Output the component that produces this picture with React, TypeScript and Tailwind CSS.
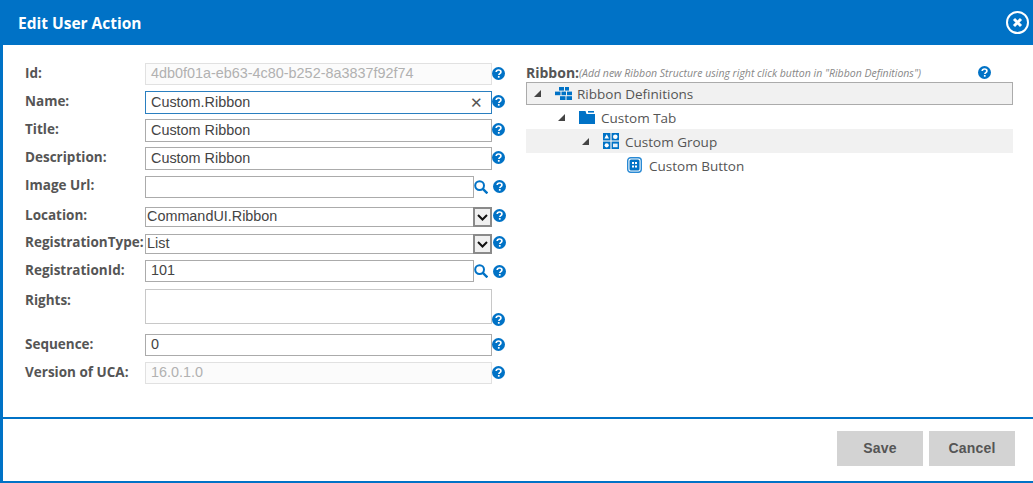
import React from "react";

const labelFont = { fontFamily: '"Open Sans", "Liberation Sans", sans-serif' };

const Help = ({ className = "" }: { className?: string }) => (
  <svg width="13" height="13" viewBox="0 0 13 13" className={`shrink-0 ${className}`}>
    <circle cx="6.5" cy="6.5" r="6.5" fill="#0072c6" />
    <path d="M4.2 5.1c0-1.3 1-2.1 2.4-2.1s2.3.8 2.3 1.9c0 1.7-2 1.6-2 3" fill="none" stroke="#fff" strokeWidth="1.7" />
    <rect x="5.9" y="9" width="1.7" height="1.7" fill="#fff" />
  </svg>
);

const Search = () => (
  <svg width="14" height="14" viewBox="0 0 14 14" className="shrink-0">
    <circle cx="5.6" cy="5.6" r="4.4" fill="none" stroke="#0072c6" strokeWidth="2" />
    <path d="M8.8 8.8l4.6 4.6" stroke="#0072c6" strokeWidth="2.4" />
  </svg>
);

const Arrow = () => (
  <svg width="7" height="7" viewBox="0 0 7 7" className="shrink-0">
    <path d="M7 0v7H0z" fill="#444" />
  </svg>
);

const Label = ({ children, className = "" }: { children: React.ReactNode; className?: string }) => (
  <div className={`w-[120px] shrink-0 whitespace-nowrap text-[13.5px] leading-[18px] font-bold text-[#555] ${className}`} style={labelFont}>
    {children}
  </div>
);

const Field = ({ value, w = "w-[347px]", h = "h-[23px]", disabled, focus }: { value: string; w?: string; h?: string; disabled?: boolean; focus?: boolean }) => (
  <div
    className={`${w} ${h} shrink-0 border flex items-center justify-between pl-[5px] pr-[8px] text-[14.4px] ${
      disabled
        ? "border-[#e1e1e1] bg-[#fbfbfb] text-[#b1b1b1]"
        : focus
          ? "border-[#2a7fc0] text-[#444]"
          : "border-[#ababab] text-[#444]"
    }`}
  >
    <span>{value}</span>
    {focus && <span className="text-[15px] text-[#555] leading-none">✕</span>}
  </div>
);

const Select = ({ value }: { value: string }) => (
  <div className="w-[347px] h-[20px] shrink-0 border border-[#ababab] flex items-center justify-between pl-px text-[14.4px] text-[#444]">
    <span>{value}</span>
    <div className="w-[19px] h-[20px] border-2 border-[#8a8a8a] bg-[#f0f0f0] flex items-center justify-center -mr-px">
      <svg width="11" height="7" viewBox="0 0 11 7">
        <path d="M1 1l4.5 4.5L10 1" fill="none" stroke="#111" strokeWidth="2" />
      </svg>
    </div>
  </div>
);

const RibbonDefsIcon = () => (
  <svg width="17" height="13" viewBox="0 0 17 13">
    <g fill="#0072c6">
      <rect x="4" y="0" width="5" height="3.6" />
      <rect x="10" y="0" width="4" height="3.6" />
      <rect x="0" y="4.6" width="5.5" height="3.6" />
      <rect x="6.5" y="4.6" width="4.5" height="3.6" />
      <rect x="12" y="4.6" width="5" height="3.6" />
      <rect x="5" y="9.2" width="5.5" height="3.8" />
      <rect x="11.5" y="9.2" width="5.5" height="3.8" />
    </g>
  </svg>
);

const TabIcon = () => (
  <svg width="16" height="13" viewBox="0 0 16 13">
    <path d="M0 0h6.5l1 3H16v10H0z" fill="#0072c6" />
    <rect x="9" y="0" width="6" height="1.6" fill="#0072c6" />
  </svg>
);

const GroupIcon = () => (
  <svg width="16" height="16" viewBox="0 0 16 16">
    <rect x="0" y="0" width="7.4" height="7.4" fill="#0072c6" />
    <rect x="8.6" y="0" width="7.4" height="7.4" fill="#0072c6" />
    <rect x="0" y="8.6" width="7.4" height="7.4" fill="#0072c6" />
    <rect x="8.6" y="8.6" width="7.4" height="7.4" fill="#0072c6" />
    <rect x="10" y="10.6" width="4.6" height="3.6" fill="#e8f1f9" />
    <path d="M3.7 1.3l2.3 4.2h-4.6z" fill="#fff" />
    <circle cx="12.3" cy="3.7" r="2.3" fill="#fff" />
    <circle cx="3.7" cy="12.3" r="2.1" fill="#fff" />
  </svg>
);

const ButtonIcon = () => (
  <svg width="15" height="16" viewBox="0 0 15 16">
    <rect x="0.7" y="0.7" width="13.6" height="14.6" rx="3" fill="#fff" stroke="#2a8ad4" strokeWidth="1.4" />
    <rect x="2.5" y="2.5" width="10" height="11" rx="1.5" fill="#0072c6" />
    <g fill="#fff">
      <rect x="5" y="5" width="2" height="2" />
      <rect x="8" y="5" width="2" height="2" />
      <rect x="5" y="8.5" width="2" height="2" />
      <rect x="8" y="8.5" width="2" height="2" />
    </g>
  </svg>
);

const TreeRow = ({ indent, arrow, icon, text, className = "", textClass = "mt-[3px]" }: { indent: string; arrow?: boolean; icon: React.ReactNode; text: string; className?: string; textClass?: string }) => (
  <div className={`flex items-center text-[13.5px] text-[#555] ${indent} ${className}`} style={labelFont}>
    <div className="w-[21px] shrink-0 flex">{arrow && <Arrow />}</div>
    <div className="w-[17px] shrink-0 mr-[5px] flex">{icon}</div>
    <span className={textClass}>{text}</span>
  </div>
);

const App = () => {
  return (
    <div className="w-[1033px] h-[483px] overflow-hidden bg-white flex flex-col border-l-[3px] border-b-2 border-[#0072c6]" style={{ fontFamily: '"Liberation Sans", Arial, sans-serif' }}>
      <div className="h-[45px] -ml-[3px] shrink-0 bg-[#0072c6] flex items-center justify-between pl-[18px] pr-[4px]">
        <h1 className="mt-[3px] text-[15.5px] font-bold text-white" style={labelFont}>Edit User Action</h1>
        <div className="w-[23px] h-[23px] rounded-full border-2 border-white flex items-center justify-center">
          <svg width="11" height="11" viewBox="0 0 11 11">
            <path d="M2 2l7 7M9 2l-7 7" stroke="#fff" strokeWidth="3" />
          </svg>
        </div>
      </div>

      <div className="h-[374px] shrink-0 flex border-b-2 border-[#0072c6] pt-[18px]">
        <div className="w-[523px] shrink-0 pl-[22px]">
          <div className="flex items-start">
            <Label className="mt-px">Id:</Label>
            <Field value="4db0f01a-eb63-4c80-b252-8a3837f92f74" h="h-[22px]" disabled />
            <Help className="mt-[4px]" />
          </div>
          <div className="flex items-start mt-[6px]">
            <Label className="mt-px">Name:</Label>
            <Field value="Custom.Ribbon" focus />
            <Help className="mt-[4px]" />
          </div>
          <div className="flex items-start mt-[5px]">
            <Label className="mt-px">Title:</Label>
            <Field value="Custom Ribbon" />
            <Help className="mt-[4px]" />
          </div>
          <div className="flex items-start mt-[5px]">
            <Label className="mt-px">Description:</Label>
            <Field value="Custom Ribbon" />
            <Help className="mt-[4px]" />
          </div>
          <div className="flex items-start mt-[6px]">
            <Label>Image Url:</Label>
            <Field value="" w="w-[329px]" h="h-[22px]" />
            <div className="mt-[4px]"><Search /></div>
            <Help className="ml-[5px] mt-[4px]" />
          </div>
          <div className="flex items-start mt-[9px]">
            <Label className="-mt-px">Location:</Label>
            <Select value="CommandUI.Ribbon" />
            <Help className="ml-px mt-[2px]" />
          </div>
          <div className="flex items-start mt-[7px]">
            <Label className="-mt-px">RegistrationType:</Label>
            <Select value="List" />
            <Help className="ml-px mt-[2px]" />
          </div>
          <div className="flex items-start mt-[6px]">
            <Label className="mt-px">RegistrationId:</Label>
            <Field value="101" w="w-[329px]" h="h-[22px]" />
            <div className="mt-[4px]"><Search /></div>
            <Help className="ml-[5px] mt-[5px]" />
          </div>
          <div className="flex items-start h-[35px] mt-[7px]">
            <Label className="mt-[2px]">Rights:</Label>
            <div className="w-[347px] h-[35px] shrink-0 border border-[#c8c8c8]" />
            <Help className="mt-[24px]" />
          </div>
          <div className="flex items-start mt-[10px]">
            <Label className="mt-px">Sequence:</Label>
            <Field value="0" h="h-[22px]" />
            <Help className="mt-[4px]" />
          </div>
          <div className="flex items-start mt-[6px]">
            <Label className="mt-px">Version of UCA:</Label>
            <Field value="16.0.1.0" h="h-[22px]" disabled />
            <Help className="mt-[4px]" />
          </div>
        </div>

        <div className="w-[487px] shrink-0">
          <div className="h-[19px] flex items-center relative">
            <span className="text-[14px] font-bold text-[#555]" style={labelFont}>Ribbon:</span>
            <span className="mt-[3px] text-[10.5px] italic text-[#888]" style={labelFont}>(Add new Ribbon Structure using right click button in "Ribbon Definitions")</span>
            <Help className="absolute left-[452px] top-[3px]" />
          </div>
          <TreeRow indent="h-[23px] pl-[7px]" arrow icon={<RibbonDefsIcon />} text="Ribbon Definitions" textClass="mt-[1px]" className="border border-[#ababab] bg-[#f1f1f1]" />
          <TreeRow indent="h-[24px] pl-[32px]" arrow icon={<TabIcon />} text="Custom Tab" />
          <TreeRow indent="h-[24px] pl-[56px]" arrow icon={<GroupIcon />} text="Custom Group" className="bg-[#f1f1f1]" />
          <TreeRow indent="h-[24px] pl-[80px]" icon={<ButtonIcon />} text="Custom Button" />
        </div>
      </div>

      <div className="flex-1 flex justify-end items-start gap-[6px] pt-[12px] pr-[18px]">
        <button className="w-[86px] h-[35px] bg-[#d3d3d3] text-[14px] font-bold text-[#555] tracking-[0.2px]">Save</button>
        <button className="w-[86px] h-[35px] bg-[#d3d3d3] text-[14px] font-bold text-[#555] tracking-[0.2px]">Cancel</button>
      </div>
    </div>
  );
};

export default App;
